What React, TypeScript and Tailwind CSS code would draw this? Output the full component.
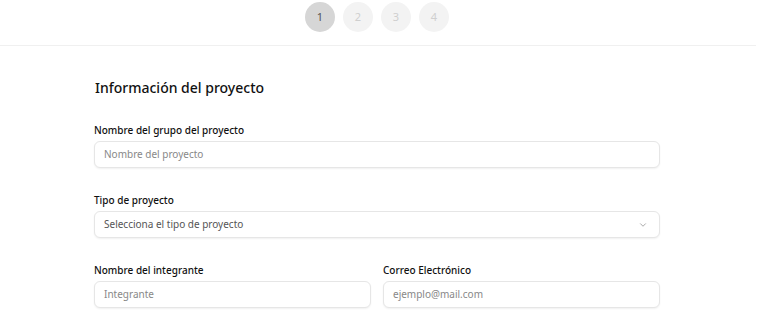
import React from "react";

const font = { fontFamily: '"Noto Sans", "Open Sans", sans-serif' };

function Field({ label, placeholder }: { label: string; placeholder: string }) {
  return (
    <div className="flex flex-col">
      <label className="text-[10px] leading-[14px] font-medium text-[#111] mb-[4px]">{label}</label>
      <div className="h-[27px] rounded-[6px] border border-[#e6e6e6] bg-white shadow-[0_1px_2px_rgba(0,0,0,0.06)] flex items-center px-[9px]">
        <span className="text-[10px] text-[#888]">{placeholder}</span>
      </div>
    </div>
  );
}

export default function App() {
  return (
    <div className="w-[768px] h-[325px] bg-white overflow-hidden" style={font}>
      <div className="h-[46px] border-b border-[#f0f0f0] w-[756px] flex items-start justify-center pt-[2px]">
        <div className="flex gap-[8px] mr-[2px]">
          <div className="w-[30px] h-[30px] rounded-full bg-[#d6d6d6] flex items-center justify-center text-[11px] text-[#555]">1</div>
          <div className="w-[30px] h-[30px] rounded-full bg-[#f3f3f3] flex items-center justify-center text-[11px] text-[#cfcfcf]">2</div>
          <div className="w-[30px] h-[30px] rounded-full bg-[#f3f3f3] flex items-center justify-center text-[11px] text-[#cfcfcf]">3</div>
          <div className="w-[30px] h-[30px] rounded-full bg-[#f3f3f3] flex items-center justify-center text-[11px] text-[#cfcfcf]">4</div>
        </div>
      </div>
      <div className="pl-[94px] w-[660px] pt-[32px]">
        <h2 className="text-[14px] leading-[20px] font-medium text-[#111] ml-[1px]">Información del proyecto</h2>
        <div className="mt-[25px] flex flex-col gap-[25px]">
          <Field label="Nombre del grupo del proyecto" placeholder="Nombre del proyecto" />
          <div className="flex flex-col">
            <label className="text-[10px] leading-[14px] font-medium text-[#111] mb-[4px]">Tipo de proyecto</label>
            <div className="h-[27px] rounded-[6px] border border-[#e6e6e6] bg-white shadow-[0_1px_2px_rgba(0,0,0,0.06)] flex items-center justify-between px-[9px]">
              <span className="text-[10px] text-[#555]">Selecciona el tipo de proyecto</span>
              <svg width="10" height="10" viewBox="0 0 24 24" fill="none" stroke="#999" strokeWidth="2" strokeLinecap="round" strokeLinejoin="round" className="mr-[2px]">
                <path d="m6 9 6 6 6-6" />
              </svg>
            </div>
          </div>
          <div className="grid grid-cols-2 gap-[12px]">
            <Field label="Nombre del integrante" placeholder="Integrante" />
            <Field label="Correo Electrónico" placeholder="ejemplo@mail.com" />
          </div>
        </div>
      </div>
    </div>
  );
}
